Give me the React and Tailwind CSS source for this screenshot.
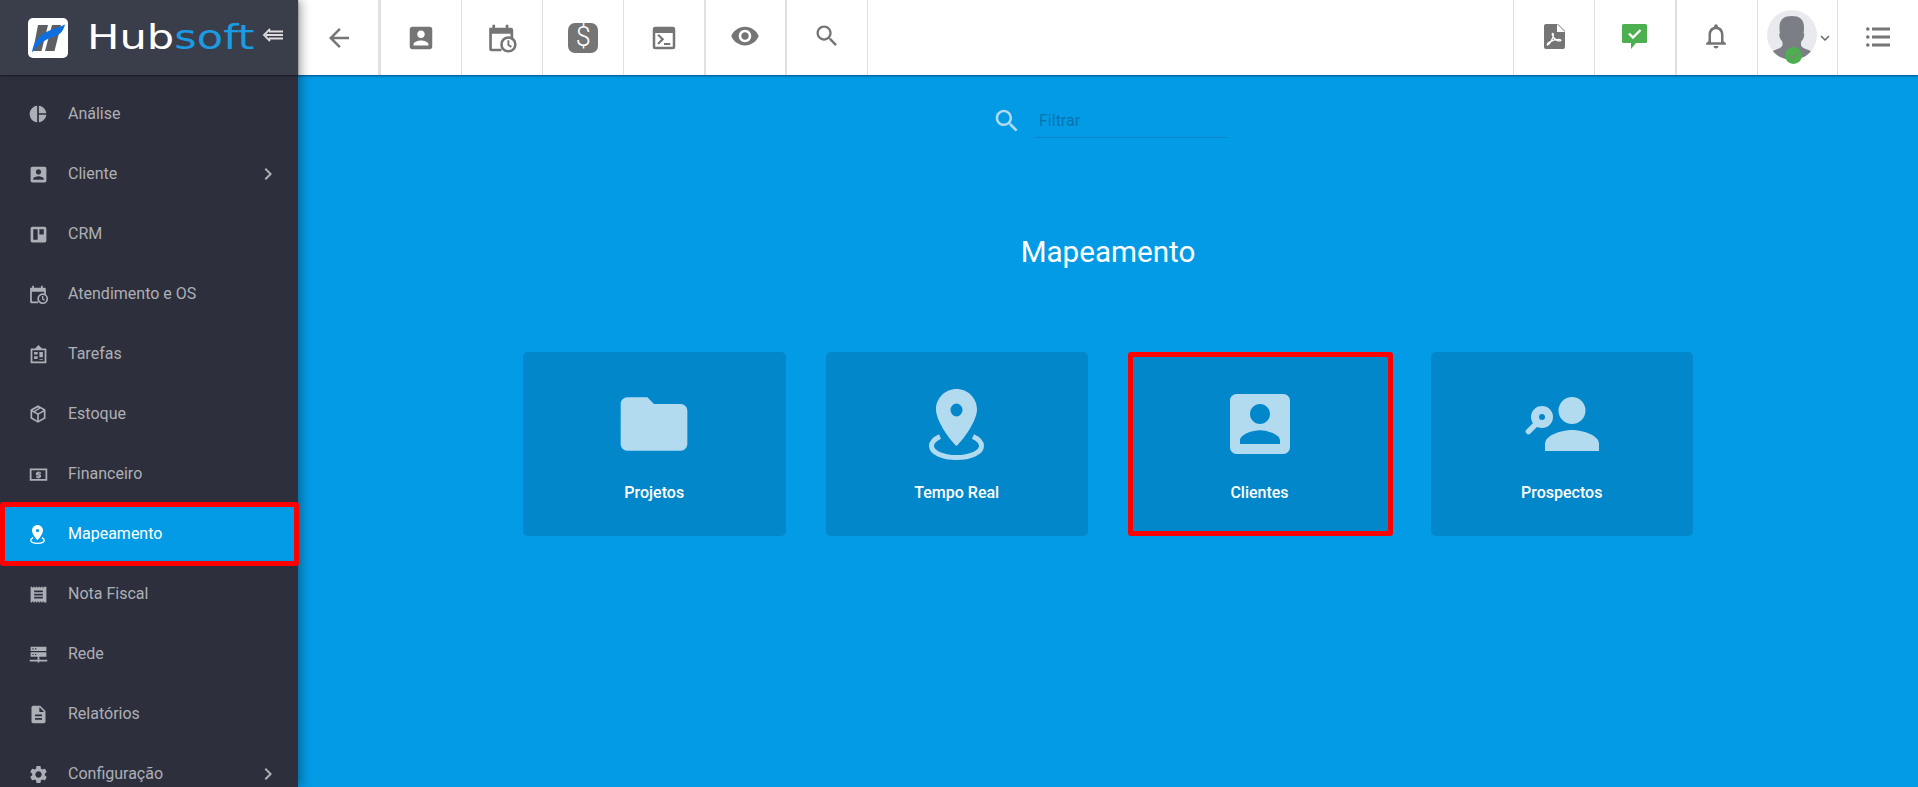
const M = {
  arrow: "M20 11H7.83l5.59-5.59L12 4l-8 8 8 8 1.41-1.41L7.83 13H20v-2z",
  contact: "M3 5v14c0 1.1.89 2 2 2h14c1.1 0 2-.9 2-2V5c0-1.1-.9-2-2-2H5c-1.11 0-2 .9-2 2zm12 4c0 1.66-1.34 3-3 3s-3-1.34-3-3 1.34-3 3-3 3 1.34 3 3zm-9 8c0-2 4-3.1 6-3.1s6 1.1 6 3.1v1H6v-1z",
  eye: "M12 4.5C7 4.5 2.73 7.61 1 12c1.73 4.39 6 7.5 11 7.5s9.27-3.11 11-7.5c-1.73-4.39-6-7.5-11-7.5zM12 17c-2.76 0-5-2.24-5-5s2.24-5 5-5 5 2.24 5 5-2.24 5-5 5zm0-8c-1.66 0-3 1.34-3 3s1.34 3 3 3 3-1.34 3-3-1.34-3-3-3z",
  search: "M15.5 14h-.79l-.28-.27C15.41 12.59 16 11.11 16 9.5 16 5.91 13.09 3 9.5 3S3 5.91 3 9.5 5.91 16 9.5 16c1.61 0 3.09-.59 4.23-1.57l.27.28v.79l5 4.99L20.49 19l-4.99-5zm-6 0C7.01 14 5 11.99 5 9.5S7.01 5 9.5 5 14 7.01 14 9.5 11.99 14 9.5 14z",
  folder: "M10 4H4c-1.1 0-1.99.9-1.99 2L2 18c0 1.1.9 2 2 2h16c1.1 0 2-.9 2-2V8c0-1.1-.9-2-2-2h-8l-2-2z",
  pie: "M11 2v20c-5.07-.5-9-4.79-9-10s3.93-9.5 9-10zm2.03 0v8.99H22c-.47-4.74-4.24-8.52-8.97-8.99zm0 11.01V22c4.74-.47 8.5-4.25 8.97-8.99h-8.97z",
  chevron: "M10 6L8.59 7.41 13.17 12l-4.58 4.59L10 18l6-6z",
  expand: "M16.59 8.59L12 13.17 7.41 8.59 6 10l6 6 6-6z",
  gear: "M19.14 12.94c.04-.3.06-.61.06-.94 0-.32-.02-.64-.07-.94l2.03-1.58c.18-.14.23-.41.12-.61l-1.92-3.32c-.12-.22-.37-.29-.59-.22l-2.39.96c-.5-.38-1.03-.7-1.62-.94l-.36-2.54c-.04-.24-.24-.41-.48-.41h-3.84c-.24 0-.43.17-.47.41l-.36 2.54c-.59.24-1.13.57-1.62.94l-2.39-.96c-.22-.08-.47 0-.59.22L2.74 8.87c-.12.21-.08.47.12.61l2.03 1.58c-.05.3-.09.63-.09.94s.02.64.07.94l-2.03 1.58c-.18.14-.23.41-.12.61l1.92 3.32c.12.22.37.29.59.22l2.39-.96c.5.38 1.03.7 1.62.94l.36 2.54c.05.24.24.41.48.41h3.84c.24 0 .44-.17.47-.41l.36-2.54c.59-.24 1.13-.56 1.62-.94l2.39.96c.22.08.47 0 .59-.22l1.92-3.32c.12-.22.07-.47-.12-.61l-2.01-1.58zM12 15.6c-1.98 0-3.6-1.62-3.6-3.6s1.62-3.6 3.6-3.6 3.6 1.62 3.6 3.6-1.62 3.6-3.6 3.6z",
  doc: "M14 2H6c-1.1 0-1.99.9-1.99 2L4 20c0 1.1.89 2 1.99 2H18c1.1 0 2-.9 2-2V8l-6-6zm2 16H8v-2h8v2zm0-4H8v-2h8v2zm-3-5V3.5L18.5 9H13z",
  bell: "M12 22c1.1 0 2-.9 2-2h-4c0 1.1.9 2 2 2zm6-6v-5c0-3.07-1.63-5.64-4.5-6.32V4c0-.83-.67-1.5-1.5-1.5s-1.5.67-1.5 1.5v.68C7.64 5.36 6 7.92 6 11v5l-2 2v1h16v-1l-2-2zm-2 1H8v-6c0-2.48 1.51-4.5 4-4.5s4 2.02 4 4.5v6z",
  crm: "M3 5a2 2 0 0 1 2-2h14a2 2 0 0 1 2 2v14a2 2 0 0 1-2 2H5a2 2 0 0 1-2-2V5zm3 1v12h5V6H6zm7 0v6h5V6h-5z",
  terminal: "M3 5a2 2 0 0 1 2-2h14a2 2 0 0 1 2 2v14a2 2 0 0 1-2 2H5a2 2 0 0 1-2-2V5zm2 3v11h14V8H5zm1.6 1.8L8 8.9l4.2 4.1L8 17.1l-1.4-.9 3.1-3.2-3.1-3.2zM12 16h5v1.6h-5V16z",
  nota: "M3 3h1.5v1H6V3h1.5v1H9V3h1.5v1H12V3h1.5v1H15V3h1.5v1H18V3h3v18h-3v-1h-1.5v1H15v-1h-1.5v1H12v-1h-1.5v1H9v-1H7.500v1H6v-1H4.500v1H3V3zm4 4.500V9.500h10V7.500H7zm0 3.500v2h10v-2H7zm0 3.500v2h10v-2H7z",
  rede: "M3 3h18v5H3V3zm2 1.800v1.400h1.500V4.800H5zm3 0v1.400h1.500V4.800H8zM3 9.500h18v5H3v-5zm2 1.800v1.400h1.500v-1.400H5zm3 0v1.400h1.500v-1.400H8zM11 14.500h2V18h9v2h-9v1h-2v-1H2v-2h9v-3.500z",
  tarefas: "M12 1l4 4h5v17H3V5h5l4-4zM5 7v13h14V7H5zm2 2h4v3H7V9zm6 0h4v6h-4V9zm-6 5h4v3H7v-3zm6 3h4v1h-4v-1z",
  cube: "M12 1.500l9 5.200v10.600l-9 5.200-9-5.200V6.700l9-5.200zM5.600 7.500L12 11.200l6.400-3.700L15 5.500 8.700 9.200 7 8.300l6-3.600-1-.6-6.400 3.400zM5 9.200v7l6 3.500v-7L5 9.200zm8 3.500v7l6-3.500v-7l-6 3.500z",
  money: "M2 5h20v14H2V5zm2 2v10h16V7H4zm7.200 1.500h1.600v1h2v1.500h-3.200v.8h2.300l.9.800v2.200l-.9.800h-1.100v1h-1.600v-1h-2V14h3.300v-.8H9.900l-.9-.8v-2.100l.9-.8h1.300v-1z",
};

function Mat({ d, size, className }) {
  return (
    <svg viewBox="0 0 24 24" width={size} height={size} className={className} fill="currentColor" fillRule="evenodd">
      <path d={d} />
    </svg>
  );
}

function Pin({ className, width, height }) {
  return (
    <svg viewBox="0 0 55 71" width={width} height={height} className={className} fill="none">
      <path fill="currentColor" fillRule="evenodd" d="M27.500 0C38.800 0 48 9 48 20.500 48 31 36 49 27.500 57 19 49 7 31 7 20.500 7 9 16.200 0 27.500 0zm0 14.500a6 6.500 0 1 0 0 13 6 6.500 0 0 0 0-13z" />
      <path stroke="currentColor" strokeWidth="5" d="M11 47.500C5.500 50 2.500 53 2.500 57c0 6.500 11 11.500 25 11.500s25-5 25-11.500c0-4-3-7-8.500-9.500" />
    </svg>
  );
}

function CalClock({ size, bg, className }) {
  return (
    <svg viewBox="0 0 30 30" width={size} height={size} className={className}>
      <path fill="currentColor" fillRule="evenodd" d="M3 5.500h3V2.500h2.500v3h10V2.500H21v3h2.500A2 2 0 0 1 25.500 7.500v8h-2.500V11H5.500v14h9v2.500H5a2 2 0 0 1-2-2V5.500z" />
      <circle cx="21" cy="21" r="6.500" fill={bg} stroke="currentColor" strokeWidth="2.400" />
      <path d="M21 17.200V21.500l2.800 1.800" fill="none" stroke="currentColor" strokeWidth="1.800" />
    </svg>
  );
}

function Prospect() {
  return (
    <svg viewBox="0 0 74 54" width="74" height="54" className="text-[#b3dbef]" fill="none">
      <ellipse cx="47" cy="13.500" rx="13.500" ry="13.500" fill="currentColor" />
      <path fill="currentColor" d="M20 54v-7c0-9 17-14 27-14s27 5 27 14v7H20z" />
      <circle cx="17" cy="20" r="7" stroke="currentColor" strokeWidth="8" />
      <path d="M11 27L3.500 34.500" stroke="currentColor" strokeWidth="5.500" strokeLinecap="round" />
    </svg>
  );
}

function Logo() {
  return (
    <div className="w-[40px] h-[40px] rounded-[5px] bg-white shrink-0">
      <svg viewBox="0 0 40 40" width="40" height="40">
        <path fill="#5d5f63" d="M10 7h10l-6.500 26H5l5-26zM24 7h9l-6.500 26H17l7-26z" />
        <path fill="#0f6fe0" d="M37 6.500c-2 8-6 10.500-12 12.500-8 2.500-14 7-21 15.500 1-9 6-16 13-20 7-3.500 13-4.500 20-8z" />
      </svg>
    </div>
  );
}

const menu = [
  { label: "Análise", icon: <Mat d={M.pie} size={20} /> },
  { label: "Cliente", icon: <Mat d={M.contact} size={21} />, more: true },
  { label: "CRM", icon: <Mat d={M.crm} size={21} /> },
  { label: "Atendimento e OS", icon: <CalClock size={21} bg="#2d303c" /> },
  { label: "Tarefas", icon: <Mat d={M.tarefas} size={21} /> },
  { label: "Estoque", icon: <Mat d={M.cube} size={20} /> },
  { label: "Financeiro", icon: <Mat d={M.money} size={21} /> },
  { label: "Mapeamento", icon: <Pin width={15} height={19} />, active: true },
  { label: "Nota Fiscal", icon: <Mat d={M.nota} size={21} /> },
  { label: "Rede", icon: <Mat d={M.rede} size={21} /> },
  { label: "Relatórios", icon: <Mat d={M.doc} size={21} /> },
  { label: "Configuração", icon: <Mat d={M.gear} size={21} />, more: true },
];

function Row({ item }) {
  if (item.active) {
    return (
      <div className="relative z-10 -my-[2px] h-[64px] w-[299px] flex items-center rounded-[3px] border-[5px] border-[#ff0000] bg-[#039be5] text-white">
        <span className="w-[63px] pl-[20px] pr-[18px] flex justify-center shrink-0">{item.icon}</span>
        <span className="text-[16px]">{item.label}</span>
      </div>
    );
  }
  return (
    <div className="h-[60px] flex items-center text-[#adafb6]">
      <span className="w-[68px] pl-[27px] pr-[19px] flex justify-center shrink-0">{item.icon}</span>
      <span className="text-[16px] flex-1">{item.label}</span>
      {item.more && <Mat d={M.chevron} size={24} className="mr-[18px]" />}
    </div>
  );
}

function Cell({ children, border = "border-r", wide }) {
  return (
    <div className={`${wide ? "w-[82.500px]" : "w-[81.300px]"} h-full flex items-center justify-center shrink-0 border-[#e0e0e0] ${border}`}>
      {children}
    </div>
  );
}

function Card({ label, selected, children }) {
  return (
    <div className={`h-[184px] bg-[#0387cb] flex flex-col items-center ${selected ? "w-[265px] -mr-[2.500px] pr-[2px] rounded-[3px] border-[5px] border-[#ff0000]" : "w-[262.500px] rounded-[5px] border-[5px] border-transparent"}`}>
      <div className="h-[80px] mt-[27px] flex items-center justify-center text-[#b3dbef]">{children}</div>
      <div className="mt-[17px] text-[16px] font-medium text-white leading-[24px]">{label}</div>
    </div>
  );
}

export default function App() {
  return (
    <div className="w-full h-[787px] overflow-hidden flex font-['Roboto',sans-serif] bg-[#039be5]">
      <aside className="relative z-20 w-[298px] h-full shrink-0 bg-[#2d303c] shadow-[3px_0_10px_rgba(0,0,0,0.35)]">
        <div className="h-[75px] bg-[#3a3e4b] flex items-center pl-[28px] shadow-[0_1px_2px_rgba(0,0,0,0.5)]">
          <Logo />
          <div className="ml-[19px] -mt-[2px] w-[164px] h-[40px] flex items-center overflow-visible">
            <span className="font-['DejaVu_Sans',sans-serif] text-[34px] font-normal leading-none origin-left scale-x-[1.27] whitespace-nowrap">
              <span className="text-white">Hub</span>
              <span className="text-[#1b9be2]">soft</span>
            </span>
          </div>
          <svg viewBox="0 0 22 16" width="22" height="16" className="ml-[11px] -mt-[5px] text-[#dddddd]" fill="none" stroke="currentColor" strokeWidth="1.800">
            <path d="M8 2L2 8l6 6M7 4.500h14M4 8h17M7 11.500h14" />
          </svg>
        </div>
        <nav className="pt-[9px]">
          {menu.map((m) => (
            <Row key={m.label} item={m} />
          ))}
        </nav>
      </aside>

      <div className="flex-1 min-w-0 flex flex-col">
        <header className="relative z-10 h-[75px] bg-white flex items-center justify-between shadow-[0_1px_2px_rgba(0,60,110,0.8)] text-[#757575]">
          <div className="flex h-full">
            <Cell wide border="border-r-[3px]"><Mat d={M.arrow} size={30} className="ml-[2px]" /></Cell>
            <Cell><Mat d={M.contact} size={30} /></Cell>
            <Cell><CalClock size={32} bg="#ffffff" className="ml-[1px]" /></Cell>
            <Cell>
              <span className="w-[30px] h-[30px] rounded-[7px] bg-[#757575] text-white flex items-center justify-center text-[27px] font-light leading-none">$</span>
            </Cell>
            <Cell border="border-r-2"><Mat d={M.terminal} size={30} /></Cell>
            <Cell border="border-r-2"><Mat d={M.eye} size={30} className="-mt-[4px]" /></Cell>
            <Cell><Mat d={M.search} size={28} className="-mt-[4px]" /></Cell>
          </div>
          <div className="flex h-full">
            <Cell border="border-l">
              <svg viewBox="0 0 21 25" width="21" height="25" className="-mt-[2px] ml-[1px]">
                <path fill="#757575" d="M2 0h12l7 7v16a2 2 0 0 1-2 2H2a2 2 0 0 1-2-2V2a2 2 0 0 1 2-2z" />
                <path fill="#ffffff" d="M13 0l8 8h-8V0z" />
                <path fill="none" stroke="#ffffff" strokeWidth="1.300" d="M3.500 21c2-1 4-4 5.500-8 .5-2 .5-3.500-.3-3.500S8 11 10 14c1.500 2 4 3 6.500 2.800.8-.5 0-1.400-1.500-1.400-3.500 0-7 1-10 3-1.500 1-2 2.500-1.500 2.600z" />
              </svg>
            </Cell>
            <Cell border="border-l">
              <svg viewBox="0 0 25 25" width="25" height="25" className="-mt-[2px] -ml-[1px]">
                <path fill="#4caf50" d="M1.500 0h22A1.500 1.500 0 0 1 25 1.500v16a1.500 1.500 0 0 1-1.500 1.500H14l-5 6v-6H1.500A1.500 1.500 0 0 1 0 17.500v-16A1.500 1.500 0 0 1 1.500 0z" />
                <path fill="none" stroke="#ffffff" strokeWidth="2.400" d="M7 9.500l4 4 7.500-7.500" />
              </svg>
            </Cell>
            <Cell border="border-l-2"><Mat d={M.bell} size={30} className="-mt-[3px] -ml-[3px]" /></Cell>
            <div className="relative w-[80px] h-full shrink-0 border-l border-[#e0e0e0] flex items-center">
              <div className="ml-[9px] -mt-[5px] w-[50px] h-[50px] rounded-full bg-[#e9eaee] overflow-hidden">
                <svg viewBox="0 0 50 50" width="50" height="50">
                  <path fill="#7b7f85" d="M25 6c7 0 12 3 12 11 0 3 0 5-.5 6 1 .5 1 3 0 5-.5 2-1.500 2.500-2 3-1 3-1 5 2 7 3 1.500 7 2.500 10 4.500l3 8H0l3-8c3-2 7-3 10-4.500 3-2 3-4 2-7-.5-.5-1.500-1-2-3-1-2-1-4.500 0-5-.5-1-.5-3-.5-6 0-8 5-11 12.500-11z" />
                </svg>
              </div>
              <span className="absolute left-[27px] top-[47px] w-[17px] h-[17px] rounded-full bg-[#4caf50] flex items-center justify-center">
                <svg viewBox="0 0 17 17" width="17" height="17">
                  <path fill="none" stroke="#7b8a78" strokeWidth="1.500" d="M4 8l3.500 3.500L13 6" />
                </svg>
              </span>
              <Mat d={M.expand} size={18} className="-ml-[1px] text-[#666666]" />
            </div>
            <Cell border="border-l">
              <svg viewBox="0 0 24 20" width="24" height="20" fill="currentColor" className="-mt-[1px]">
                <circle cx="1.800" cy="2" r="1.800" />
                <circle cx="1.800" cy="10" r="1.800" />
                <circle cx="1.800" cy="18" r="1.800" />
                <rect x="6" y="0.500" width="18" height="3" />
                <rect x="6" y="8.500" width="18" height="3" />
                <rect x="6" y="16.500" width="18" height="3" />
              </svg>
            </Cell>
          </div>
        </header>

        <main className="flex-1 bg-[#039be5] flex flex-col items-center pt-[26px]">
          <div className="h-[40px] flex items-center ml-[3px]">
            <Mat d={M.search} size={30} className="text-[#b3dbef]" />
            <input
              placeholder="Filtrar"
              className="ml-[13px] w-[192px] h-[34px] pl-[4px] border-b border-[#0b84c8] bg-transparent outline-none text-[16px] placeholder:text-[#0575b0]"
            />
          </div>
          <h1 className="mt-[91px] text-[29.600px] leading-[40px] font-normal text-white">Mapeamento</h1>
          <div className="mt-[80px] flex gap-[40px]">
            <Card label="Projetos"><Mat d={M.folder} size={80} /></Card>
            <Card label="Tempo Real"><Pin width={55} height={71} /></Card>
            <Card label="Clientes" selected><Mat d={M.contact} size={80} /></Card>
            <Card label="Prospectos"><Prospect /></Card>
          </div>
        </main>
      </div>
    </div>
  );
}
